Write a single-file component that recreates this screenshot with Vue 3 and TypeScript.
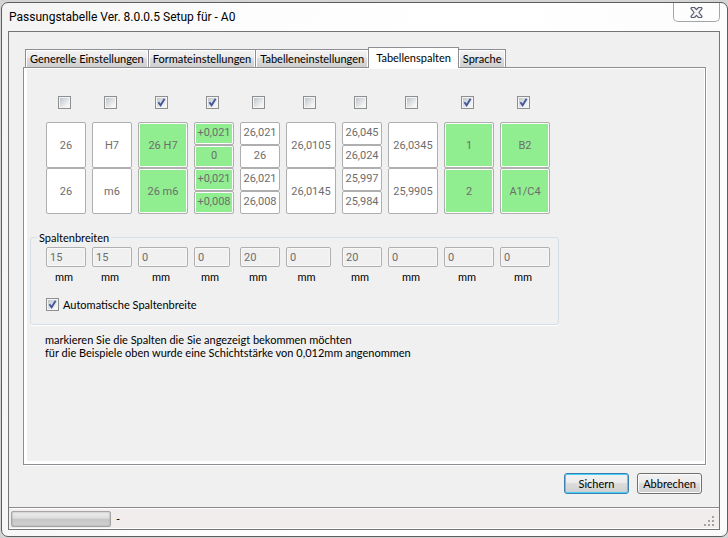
<script setup lang="ts">
import { ref } from 'vue'

interface Column {
  id: string
  shown: boolean
  wide: boolean
  field: string
  size: string
  cells: string[]
}

const tabs = [
  'Generelle Einstellungen',
  'Formateinstellungen',
  'Tabelleneinstellungen',
  'Tabellenspalten',
  'Sprache',
]
const activeTab = ref('Tabellenspalten')

const columns = ref<Column[]>([
  { id: 'c1', shown: false, wide: false, field: 'normal', size: '15', cells: ['26', '26'] },
  { id: 'c2', shown: false, wide: false, field: 'normal', size: '15', cells: ['H7', 'm6'] },
  { id: 'c3', shown: true, wide: true, field: 'normal', size: '0', cells: ['26 H7', '26 m6'] },
  { id: 'c4', shown: true, wide: false, field: 'short', size: '0', cells: ['+0,021', '0', '+0,021', '+0,008'] },
  { id: 'c5', shown: false, wide: false, field: 'normal', size: '20', cells: ['26,021', '26', '26,021', '26,008'] },
  { id: 'c6', shown: false, wide: true, field: 'short', size: '0', cells: ['26,0105', '26,0145'] },
  { id: 'c7', shown: false, wide: false, field: 'normal', size: '20', cells: ['26,045', '26,024', '25,997', '25,984'] },
  { id: 'c8', shown: false, wide: true, field: 'normal', size: '0', cells: ['26,0345', '25,9905'] },
  { id: 'c9', shown: true, wide: true, field: 'normal', size: '0', cells: ['1', '2'] },
  { id: 'c10', shown: true, wide: true, field: 'normal', size: '0', cells: ['B2', 'A1/C4'] },
])

const autoWidth = ref(true)
const gripDots = [
  [8, 0], [4, 4], [8, 4], [0, 8], [4, 8], [8, 8],
]
</script>

<template>
  <div class="window">
    <header class="titlebar">
      <h1 class="title">Passungstabelle Ver. 8.0.0.5 Setup für - A0</h1>
      <button class="close" type="button" aria-label="Schließen">
        <svg width="13" height="11" viewBox="0 0 13 11">
          <path
            d="M1.5 .5H4.5L6.5 2.6L8.5 .5H11.5L12 1.6L8.9 5.5L12 9.4L11.5 10.5H8.5L6.5 8.4L4.5 10.5H1.5L1 9.4L4.1 5.5L1 1.6Z"
            fill="#f4f4f6"
            stroke="#5a5d70"
            stroke-width="1.2"
            stroke-linejoin="round"
          />
        </svg>
      </button>
    </header>

    <div class="client">
      <main class="body">
        <div class="tabs" role="tablist">
          <button
            v-for="tab in tabs"
            :key="tab"
            type="button"
            role="tab"
            class="tab"
            :class="{ active: tab === activeTab }"
            :aria-selected="tab === activeTab"
            @click="activeTab = tab"
          >
            {{ tab }}
          </button>
        </div>

        <section class="panel" role="tabpanel">
          <div class="columns">
            <div v-for="col in columns" :key="col.id" class="column" :class="{ wide: col.wide }">
              <span class="check">
                <input v-model="col.shown" type="checkbox" :aria-label="col.cells[0]" />
                <svg v-if="col.shown" class="tick" width="13" height="13" viewBox="0 0 13 13">
                  <path d="M3.4 6.2L5.6 9.2L9.6 2.8" fill="none" stroke="#41589c" stroke-width="1.9" />
                </svg>
              </span>
              <div class="cells">
                <input
                  v-for="(cell, i) in col.cells"
                  :key="i"
                  class="cell"
                  :class="{ half: col.cells.length > 2, on: col.shown }"
                  type="text"
                  :value="cell"
                  :aria-label="cell"
                  disabled
                />
              </div>
            </div>
          </div>

          <fieldset class="group">
            <legend>Spaltenbreiten</legend>
            <div class="sizes">
              <label v-for="col in columns" :key="col.id" class="size" :class="[{ wide: col.wide }, col.field]">
                <input v-model="col.size" class="field" type="text" :disabled="autoWidth" />
                <span class="unit">mm</span>
              </label>
            </div>
            <label class="auto">
              <span class="check">
                <input v-model="autoWidth" type="checkbox" />
                <svg v-if="autoWidth" class="tick" width="13" height="13" viewBox="0 0 13 13">
                  <path d="M3.4 6.2L5.6 9.2L9.6 2.8" fill="none" stroke="#41589c" stroke-width="1.9" />
                </svg>
              </span>
              Automatische Spaltenbreite
            </label>
          </fieldset>

          <p class="notes">
            markieren Sie die Spalten die Sie angezeigt bekommen möchten<br />
            für die Beispiele oben wurde eine Schichtstärke von 0,012mm angenommen
          </p>
        </section>

        <div class="actions">
          <button type="button" class="action primary">Sichern</button>
          <button type="button" class="action">Abbrechen</button>
        </div>
      </main>

      <footer class="status">
        <div class="progress" role="progressbar" aria-valuenow="0"></div>
        <span class="state">-</span>
        <svg class="grip" width="11" height="11" viewBox="0 0 11 11">
          <rect v-for="[x, y] in gripDots" :key="`${x}-${y}`" :x="x" :y="y" width="2" height="2" fill="#a5a2a2" />
        </svg>
      </footer>
    </div>
  </div>
</template>

<style>
body {
  background: #d4d4d4;
}
</style>

<style scoped>
* {
  box-sizing: border-box;
}

.window {
  display: flex;
  flex-direction: column;
  min-height: calc(100vh - 3px);
  margin: 2px 0 1px 1px;
  padding: 0 7px 6px 6px;
  border: 1px solid #5c5f61;
  border-radius: 7px;
  background: linear-gradient(100deg, #f3f3f3 0, #fdfdfd 30%, #ffffff 60%, #fbfbfb);
  color: #000;
  font: 11px/13px Lato, "Liberation Sans", sans-serif;
}

button,
input {
  font: inherit;
  color: inherit;
  margin: 0;
}

.titlebar {
  display: flex;
  justify-content: space-between;
  align-items: flex-start;
  height: 28px;
}

.title {
  margin: 0 1px;
  font: 12px/28px Roboto, sans-serif;
}

.close {
  display: flex;
  align-items: center;
  justify-content: center;
  width: 47px;
  height: 19px;
  padding: 0;
  border: 1px solid #a3a5a8;
  border-top: 0;
  border-radius: 0 0 5px 5px;
  background: #fdfdfd;
}

.client {
  flex: 1;
  display: flex;
  flex-direction: column;
  border: 1px solid #737577;
  background: #f0f0f0;
}

.body {
  flex: 1;
  display: flex;
  flex-direction: column;
  padding: 15px 13px 13px 14px;
}

.tabs {
  display: flex;
  align-items: flex-end;
  padding-left: 2px;
}

.tab {
  height: 18px;
  padding: 0 4px;
  border: 1px solid #8c8e94;
  border-bottom: 0;
  margin-right: -1px;
  box-shadow: inset 1px 1px #fff, inset -1px 0 #fff;
  background: linear-gradient(#f3f3f3, #ebebeb 50%, #dddddd 50%, #cfcfcf);
  white-space: nowrap;
}

.tab.active {
  position: relative;
  z-index: 1;
  height: 21px;
  padding: 0 7px 2px;
  margin-bottom: -1px;
  background: #fff;
}

.panel {
  flex: 1;
  padding: 28px 6px 12px;
  border: 1px solid #8c8e94;
  box-shadow: inset 3px -3px #fff, inset -1px 1px #fff, 1px 1px #fff;
}

.columns,
.sizes {
  display: flex;
  gap: 6px;
}

.columns {
  padding-left: 16px;
}

.column,
.size {
  display: flex;
  flex-direction: column;
  align-items: center;
  width: 40px;
}

.column.wide,
.size.wide {
  width: 50px;
}

.column > .check {
  margin: 0 3px 13px 0;
}

.check {
  position: relative;
  display: inline-flex;
}

.check input {
  appearance: none;
  width: 13px;
  height: 13px;
  border: 1px solid #8e8f8f;
  background: linear-gradient(135deg, #c0c5ce, #f6f6f6 85%) content-box, #f4f4f4;
  padding: 1px;
}

.tick {
  position: absolute;
  inset: 0;
  pointer-events: none;
}

.cells {
  display: flex;
  flex-direction: column;
  width: 100%;
}

.cell,
.field {
  width: 100%;
  border: 1px solid #afafaf;
  border-radius: 2px;
  color: #6d6d6d;
  font-family: Roboto, sans-serif;
}

.cell {
  height: 46px;
  padding: 1px;
  background: #fff;
  text-align: center;
}

.cell.half {
  height: 23px;
  padding-bottom: 4px;
}

.cell.on {
  background: #90ee90;
  box-shadow: inset 0 0 0 1px #fff;
}

.group {
  width: fit-content;
  min-width: 0;
  margin: 17px 0 0;
  padding: 3px 8px 13px 15px;
  border: 1px solid #d5dfe5;
  border-radius: 3px;
  box-shadow: 0 1px #fff;
}

.group legend {
  margin-left: -9px;
  padding: 0 2px;
}

.field {
  height: 20px;
  padding: 0 3px;
  background: #f0f0f0;
  box-shadow: inset 0 0 0 1px #f8f8f8;
}

.size {
  align-items: flex-start;
  gap: 3px;
}

.unit {
  width: 100%;
  padding-right: 4px;
  text-align: center;
}

.short .field,
.short .unit {
  width: 90%;
}

.auto {
  display: flex;
  align-items: center;
  gap: 4px;
  margin-top: 15px;
}

.notes {
  margin: 8px 0 0 15px;
}

.actions {
  display: flex;
  justify-content: flex-end;
  gap: 8px;
  padding: 8px 4px 0 0;
}

.action {
  width: 65px;
  height: 21px;
  padding: 0;
  border: 1px solid #707070;
  border-radius: 3px;
  box-shadow: inset 0 0 0 1px #fbfbfb;
  background: linear-gradient(#f2f2f2, #ebebeb 50%, #dddddd 50%, #cfcfcf);
}

.action.primary {
  border-color: #3c7fb1;
  box-shadow: inset 0 0 0 1px #45d0f8;
}

.status {
  display: flex;
  align-items: center;
  gap: 5px;
  height: 22px;
  padding: 0 4px 0 2px;
  border-top: 1px solid #8b8b8b;
  box-shadow: inset 0 1px #fff, inset 0 -1px #fff;
  background: #f1eded;
}

.progress {
  width: 100px;
  height: 16px;
  border: 1px solid #a5a5a5;
  border-radius: 2px;
  box-shadow: inset 0 0 2px #999;
  background: linear-gradient(#f0f0f0, #dcdcdc 45%, #c6c6c6 50%, #d2d2d2);
}

.grip {
  margin: 6px 0 0 auto;
}
</style>
